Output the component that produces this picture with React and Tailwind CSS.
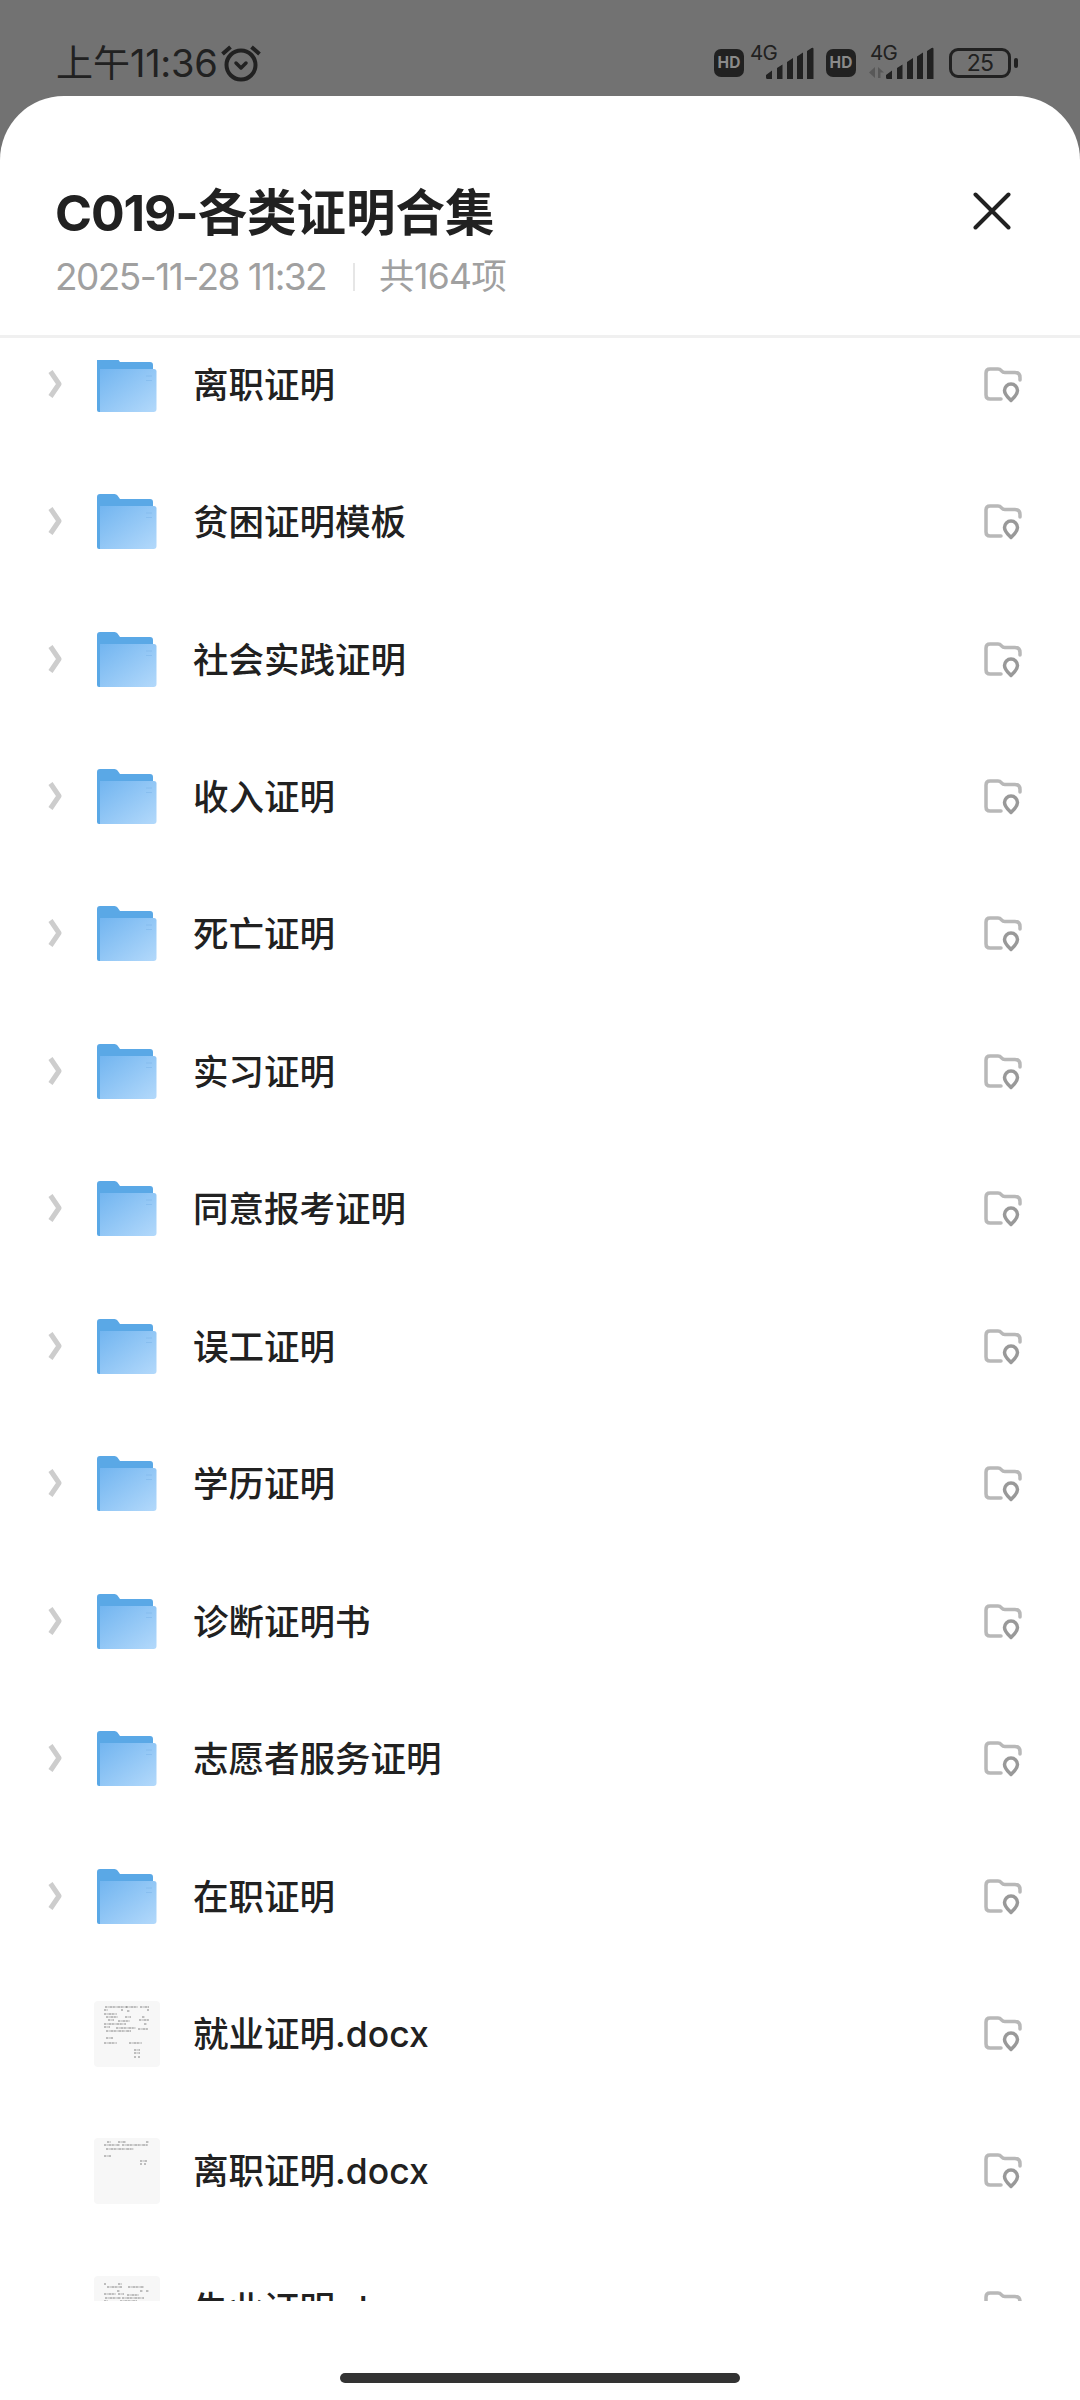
import React from "react";

const rows = [
  { name: "离职证明", type: "folder" },
  { name: "贫困证明模板", type: "folder" },
  { name: "社会实践证明", type: "folder" },
  { name: "收入证明", type: "folder" },
  { name: "死亡证明", type: "folder" },
  { name: "实习证明", type: "folder" },
  { name: "同意报考证明", type: "folder" },
  { name: "误工证明", type: "folder" },
  { name: "学历证明", type: "folder" },
  { name: "诊断证明书", type: "folder" },
  { name: "志愿者服务证明", type: "folder" },
  { name: "在职证明", type: "folder" },
  { name: "就业证明.docx", type: "doc", page: "full" },
  { name: "离职证明.docx", type: "doc", page: "short" },
  { name: "失业证明.docx", type: "doc", page: "text" },
];

// [x, y, width] of each text line on the page thumbnails
const pages = {
  full: [
    [11, 6, 22], [32, 6, 12], [46, 6, 9], [10, 9, 4], [27, 9, 2], [33, 10, 3], [53, 9, 2],
    [10, 13, 13], [12, 16, 12], [31, 16, 6], [48, 16, 3], [14, 19, 6], [24, 20, 12], [45, 19, 10],
    [10, 23, 22], [50, 23, 3], [10, 26, 6], [22, 27, 20], [44, 28, 10], [12, 30, 25],
    [12, 37, 7], [10, 42, 13], [35, 42, 13], [40, 49, 6], [40, 52, 6], [40, 56, 2], [44, 56, 2],
  ],
  short: [
    [13, 4, 4], [24, 4, 8], [52, 4, 3], [10, 7, 16], [28, 7, 26], [12, 11, 28], [10, 18, 7],
    [46, 23, 7], [46, 26, 2], [50, 26, 2],
  ],
  text: [
    [10, 8, 2], [24, 8, 4], [13, 11, 15], [34, 11, 16], [23, 15, 3], [46, 15, 3], [52, 15, 3],
    [10, 18, 12], [24, 18, 6], [33, 19, 12], [11, 22, 16], [28, 22, 22], [10, 25, 4], [26, 25, 17],
  ],
};

function HdBadge() {
  return (
    <div className="flex h-7 w-[30px] items-center justify-center rounded-[7px] bg-[#212121] font-['Inter',sans-serif] text-[15.500px] font-bold leading-none text-[#8a8a8a]">
      HD
    </div>
  );
}

function Signal({ active }) {
  return (
    <svg className="block h-9 w-[67px] overflow-visible" viewBox="0 0 67 36" fill="#212121">
      <text x="1" y="16" fontFamily="Inter, sans-serif" fontSize="20.500" letterSpacing="-0.8">4G</text>
      {active && <path d="M6 23v11l-6-5.500zM9 34V23l6 5.500h-3.500V34z" fill="#505050" opacity=".75" />}
      <path d="M17 31l6-4.500v8.500h-4.500q-1.500 0-1.500-1.500zM28 24l5.500-3.500V35H28zM38 18l6-4v21h-6zM48 12.500l6-4V35h-6zM58 7l4.500-3q2-1 2 1V35H58z" />
    </svg>
  );
}

function StatusBar() {
  return (
    <div className="flex h-24 items-start justify-between pl-[56px] pr-[62px] text-[#212121]">
      <div className="flex items-center pt-[42px]">
        <span className="-mt-1 font-['Noto_Sans_CJK_SC',sans-serif] text-[37px] leading-[42px]">上午</span>
        <span className="font-['Inter',sans-serif] text-[38px] leading-[42px] tracking-[-0.300px]">11:36</span>
        <svg className="ml-1 h-10 w-10" viewBox="0 0 40 40" fill="none" stroke="#212121" strokeWidth="4" strokeLinecap="round" strokeLinejoin="round">
          <circle cx="20" cy="22" r="14.500" />
          <path d="M1.500 11l8-7M38.500 11l-8-7" strokeLinecap="butt" />
          <path d="M15 20l5 5 5-5" strokeWidth="3.500" />
        </svg>
      </div>
      <div className="flex pt-[44px]">
        <div className="flex pt-[5px]"><HdBadge /></div>
        <div className="ml-[5px]"><Signal /></div>
        <div className="ml-[10px] pt-[5px]"><HdBadge /></div>
        <div className="ml-[13px]"><Signal active /></div>
        <div className="ml-[13px] flex items-center self-start pt-1">
          <div className="flex h-[30px] w-[62px] items-center justify-center rounded-[9px] border-[3px] border-[#212121] font-['Inter',sans-serif] text-[23px] leading-none tracking-[-0.800px]">25</div>
          <div className="ml-[3px] h-2.5 w-1 rounded-[2px] bg-[#212121]" />
        </div>
      </div>
    </div>
  );
}

function FolderIcon() {
  return (
    <svg className="block h-14 w-[60px]" viewBox="0 0 60 56">
      <defs>
        <linearGradient id="front" x1="0" y1="0" x2="1" y2="1">
          <stop offset="0" stopColor="#72b5f0" />
          <stop offset="1" stopColor="#b3d9fb" />
        </linearGradient>
      </defs>
      <path d="M0 3q0-3 3-3h14.500q2 0 3 1.500L23 5h30q3 0 3 3v12L4 55H2q-2 0-2-2z" fill="#5aa8e6" />
      <path d="M3 12h54q2.500 0 2.500 2.500V52q0 3-3 3H3z" fill="url(#front)" />
      <path d="M49 19h6M49 23.500h6" stroke="#72aee6" strokeWidth="1" opacity=".4" />
    </svg>
  );
}

function DocThumb({ page }) {
  return (
    <svg className="block h-[66px] w-[66px]" viewBox="0 0 66 66">
      <rect width="66" height="66" rx="4" fill="#f7f7f7" />
      {pages[page].map(([x, y, w], i) => (
        <path key={i} d={`M${x} ${y}h${w}`} stroke="#777" strokeWidth="0.9" strokeDasharray="2 .6 1 .8 3 .5" />
      ))}
    </svg>
  );
}

function LocateIcon() {
  return (
    <svg className="block h-9 w-[38px] shrink-0" viewBox="0 0 38 36" fill="none" strokeLinecap="round" strokeLinejoin="round">
      <path d="M17 32H6q-4 0-4-4V6q0-4 4-4h8q2 0 3.500 1.800t3.500 1.700h10q5 0 5 5V13" stroke="#b8b8b8" strokeWidth="3.500" />
      <path d="M27 33.500c-3-3-6.500-6-6.500-10a6.500 6.500 0 0 1 13 0c0 4-3.500 7-6.500 10z" stroke="#999" strokeWidth="3.500" />
    </svg>
  );
}

function Row({ item }) {
  return (
    <div className="flex h-[137.450px] shrink-0 items-center pl-[47px] pr-[58px]">
      <svg className="mb-0.5 h-7 w-[15px] shrink-0" viewBox="0 0 15 28" fill="none" stroke="#cdcdcd" strokeWidth="5">
        {item.type === "folder" && <path d="M3.500 1.500L12 14 3.500 26.500" strokeLinejoin="round" />}
      </svg>
      <div className="ml-[31px] flex w-[67px] shrink-0 justify-center">
        {item.type === "folder" ? <FolderIcon /> : <DocThumb page={item.page} />}
      </div>
      <div className="ml-[33px] flex-1 whitespace-nowrap pt-0.5 font-['Inter','Noto_Sans_CJK_SC',sans-serif] text-[35.500px] font-medium leading-[48px] text-[#212121]">
        {item.name}
      </div>
      <LocateIcon />
    </div>
  );
}

function App() {
  return (
    <div className="h-[2400px] w-[1080px] overflow-hidden bg-[#727272]">
      <StatusBar />
      <div className="flex h-[2304px] flex-col rounded-t-[64px] bg-white">
        <div className="flex h-[242px] shrink-0 items-start justify-between border-b-[3px] border-[#f0f0f0] pl-[55px] pr-[69px]">
          <div className="pt-[82px]">
            <h1 className="whitespace-nowrap text-[#212121]">
              <span className="font-['Inter',sans-serif] text-[50px] font-bold leading-[64px] tracking-[-1.100px]">C019-</span>
              <span className="font-['Noto_Sans_CJK_SC',sans-serif] text-[49.500px] font-bold leading-[64px]">各类证明合集</span>
            </h1>
            <div className="mt-1 flex h-[56px] items-center text-[#a0a0a0]">
              <span className="font-['Inter',sans-serif] text-[37px] tracking-[-1.550px]">2025-11-28 11:32</span>
              <span className="ml-[27px] mr-[24px] h-7 w-0.5 bg-[#e6e6e6]" />
              <span className="font-['Inter','Noto_Sans_CJK_SC',sans-serif] text-[35.500px] tracking-[-0.700px]">共164项</span>
            </div>
          </div>
          <button className="mt-[96px]">
            <svg className="block h-[38px] w-[38px]" viewBox="0 0 38 38" stroke="#212121" strokeWidth="4" strokeLinecap="round">
              <path d="M2.500 2.500l33 33M35.500 2.500l-33 33" />
            </svg>
          </button>
        </div>
        <div className="mt-[22px] h-[1941px] shrink-0 overflow-hidden">
          <div className="-mt-[44px] flex flex-col">
            {rows.map((item, i) => (
              <Row key={i} item={item} />
            ))}
          </div>
        </div>
        <div className="mx-auto mt-[72px] h-2.5 w-[400px] rounded-full bg-[#333333]" />
      </div>
    </div>
  );
}

export default App;
